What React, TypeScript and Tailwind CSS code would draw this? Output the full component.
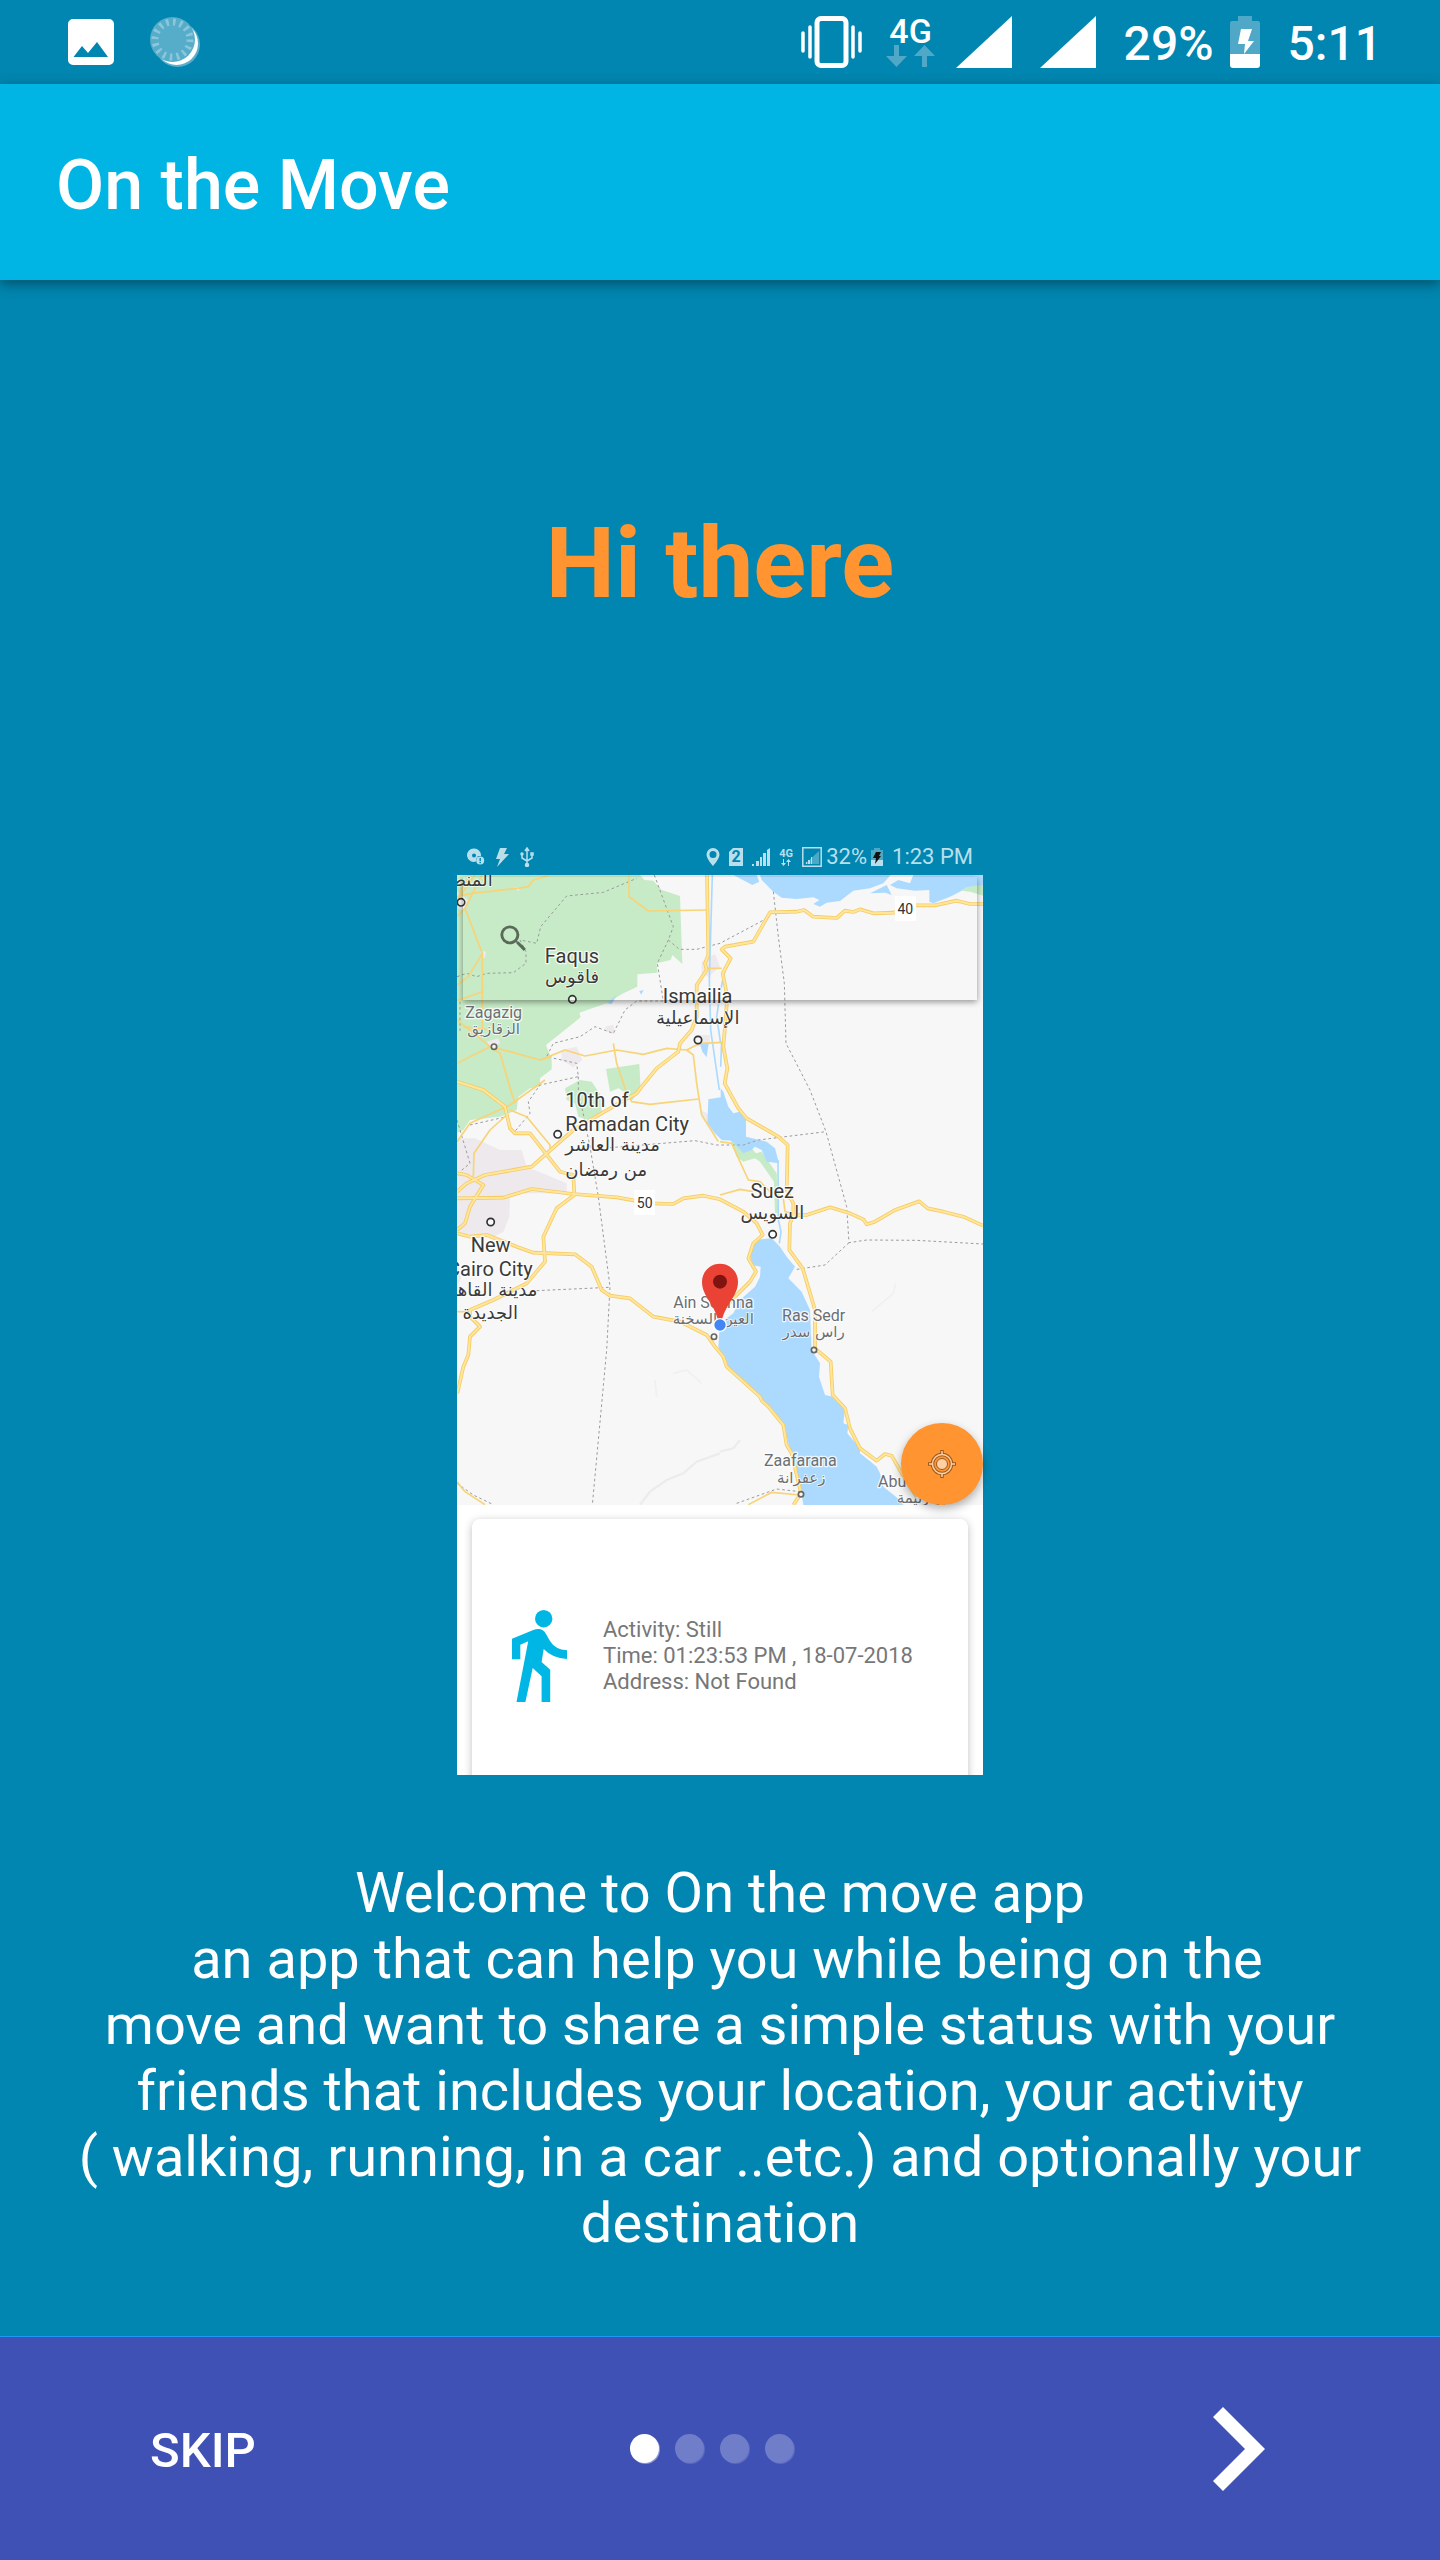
import React from "react";

const majorRoads = [
  "771,135 775,375 765,400 770,420 740,465 740,560 725,600 690,640 685,665 620,715 575,770 560,790 520,812 370,900 245,1010 105,1035 50,1060 21,1085",
  "1599,222 1560,222 1520,212 1455,226 1395,226 1330,248 1270,250 1230,238 1210,246 1185,242 1160,264 1090,260 1062,240 1040,245 960,247 910,335 825,350 815,358 842,385 818,430 832,500 820,650 832,715 824,760 865,835 890,865 985,920 1013,945 1010,1080 1030,1120 1030,1155 1020,1180 1018,1260 1058,1315 1095,1440 1095,1555 1142,1595 1148,1695 1185,1735 1200,1795 1230,1855 1280,1892 1305,1872 1325,1877 1355,1930 1400,2000",
  "1030,1155 1070,1155 1140,1132 1200,1150 1240,1168 1250,1183 1275,1175 1335,1140 1408,1114 1433,1135 1480,1145 1540,1160 1599,1187",
  "21,1105 160,1103 245,1077 370,1092 500,1102 600,1120 670,1122 700,1105 760,1097 810,1108 880,1145 920,1180 938,1215 910,1240 895,1285 918,1325 900,1355 855,1400 820,1440",
  "21,755 100,780 165,830 180,895 195,910 240,910 330,1025 370,1035 373,1095 320,1135 280,1220 285,1295 230,1360 130,1410 60,1440 60,1460 90,1490 60,1520 55,1575 40,1610 22,1690",
  "21,1210 60,1220 110,1215 200,1250 250,1268 375,1273 425,1310 455,1380 480,1397 540,1405 610,1460 690,1475 770,1515 795,1550 820,1580 830,1610 930,1700 935,1712 955,1730 1000,1785 1010,1845 1025,1870 1053,1990 1030,2025",
  "21,1030 50,1035 100,1065 60,1130 45,1180 21,1200",
];

const minorRoads = [
  "21,200 65,190 200,175 235,170 250,150 295,137",
  "95,135 45,235 97,370 97,600",
  "75,135 21,210",
  "60,135 30,185 21,230",
  "21,260 45,235",
  "97,370 55,440 21,465",
  "97,485 21,512",
  "21,570 65,605 120,650 150,670 182,780 195,820",
  "40,590 120,600",
  "21,700 120,650 180,665 270,690 345,660 405,678 500,660 580,673 650,655 710,660 730,675 740,760 755,855 805,935",
  "270,690 305,680",
  "710,660 750,640 820,637",
  "537,135 537,200 595,243 770,240",
  "490,640 500,700 525,775 545,815 600,823 745,807",
  "770,415 815,415",
  "285,750 180,825 60,880 21,935",
  "180,840 230,860 300,945 300,955",
  "170,855 120,900 72,970 70,1040",
  "810,935 845,940 895,1050 930,1055 960,1085 1025,1110",
  "810,1095 870,1078 910,1085",
  "1000,1105 1005,1145 1045,1155",
  "21,1955 45,1985 105,2024",
  "895,2024 965,1987 1050,1995",
  "21,1445 60,1445",
];

const borders = [
  "21,440 50,430 80,440 110,430 190,428 228,400 228,365 210,330 260,340 272,290 350,198 460,187 560,145",
  "613,135 670,290 655,330 688,358 740,358 810,340 960,260",
  "655,330 622,400 640,513 560,513 525,540 490,610 435,590 390,620 310,640 290,680 380,700 385,740 270,765 235,815 240,850 190,910",
  "385,740 385,780 420,950 445,1100 480,1370 470,1560 427,2025",
  "970,185 985,320 1003,460 1008,640 1080,780 1128,905 1190,1130 1197,1238 1250,1230 1400,1231 1599,1242",
  "480,953 735,932 800,945 880,945 925,930 1128,905",
  "1197,1238 1125,1305 1035,1319",
  "260,1382 478,1372",
  "860,2020 980,1977 1050,1985",
  "21,870 45,950 60,1000 30,1025",
  "60,885 170,860",
  "21,1960 70,1995 130,2024",
  "30,515 30,610",
];

const terrain = [
  "570,2024 600,1985 650,1950 700,1930 740,1895 810,1870",
  "810,1865 850,1855 870,1830",
];

const faintTerrain = [
  "1265,1445 1330,1390 1337,1360",
  "615,1650 620,1700",
  "670,1630 710,1620 755,1660",
];

type Place = { x: number; y: number; text: string; anchor?: "start" | "middle" | "end"; small?: boolean; arabic?: boolean };

const places: Place[] = [
  { x: 128, y: 168, text: "المنصورة", anchor: "end", arabic: true },
  { x: 366, y: 398, text: "Faqus" },
  { x: 366, y: 459, text: "فاقوس", arabic: true },
  { x: 743, y: 520, text: "Ismailia" },
  { x: 743, y: 582, text: "الإسماعيلية", arabic: true },
  { x: 131, y: 565, text: "Zagazig", small: true },
  { x: 131, y: 613, text: "الزقازيق", small: true, arabic: true },
  { x: 346, y: 830, text: "10th of", anchor: "start" },
  { x: 346, y: 903, text: "Ramadan City", anchor: "start" },
  { x: 346, y: 964, text: "مدينة العاشر", anchor: "start", arabic: true },
  { x: 346, y: 1038, text: "من رمضان", anchor: "start", arabic: true },
  { x: 122, y: 1265, text: "New" },
  { x: 248, y: 1337, text: "Cairo City", anchor: "end" },
  { x: 262, y: 1398, text: "مدينة القاهرة", anchor: "end", arabic: true },
  { x: 121, y: 1468, text: "الجديدة", arabic: true },
  { x: 967, y: 1103, text: "Suez" },
  { x: 967, y: 1168, text: "السويس", arabic: true },
  { x: 790, y: 1434, text: "Ain Sokhna", small: true },
  { x: 790, y: 1482, text: "العين السخنة", small: true, arabic: true },
  { x: 1091, y: 1474, text: "Ras Sedr", small: true },
  { x: 1091, y: 1522, text: "راس سدر", small: true, arabic: true },
  { x: 1051, y: 1908, text: "Zaafarana", small: true },
  { x: 1054, y: 1958, text: "زعفرانة", small: true, arabic: true },
  { x: 1284, y: 1971, text: "Abu Zenima", anchor: "start", small: true },
  { x: 1340, y: 2018, text: "أبو زنيمة", anchor: "start", small: true, arabic: true },
];

const towns: [number, number, number][] = [
  [33, 217, 11], [367, 508, 11], [744, 630, 11], [132, 650, 8], [323, 913, 11],
  [122, 1176, 11], [968, 1213, 11], [792, 1520, 8], [1092, 1560, 8], [1053, 1993, 8],
];

function MapDrawing() {
  return (
    <svg viewBox="21 135 1578 1890" className="block h-auto w-full" role="img" aria-label="Map">
      <rect x="21" y="135" width="1578" height="1890" fill="#f7f7f7" />
      <g fill="#ede9ed">
        <polygon points="21,925 75,925 150,960 215,960 230,1010 350,1060 350,1090 180,1090 178,1160 160,1205 130,1220 21,1210" />
        <polygon points="335,660 380,650 397,690 370,712 335,690" />
        <polygon points="465,590 490,585 495,612 470,605" />
        <polygon points="755,395 795,372 810,410 775,440 755,430" />
        <polygon points="735,615 780,615 778,645 735,650" />
        <polygon points="750,840 772,850 800,920 775,890" />
        <polygon points="21,1310 40,1330 21,1370" />
      </g>
      <g fill="#c6ebc6">
        <polygon points="21,135 570,135 583,150 610,152 635,180 690,198 697,402 667,375 662,390 620,400 622,428 562,433 562,470 520,490 470,520 388,548 392,562 288,645 305,690 305,718 270,745 270,770 240,775 205,800 200,840 150,860 60,870 40,900 21,908" />
        <polygon points="468,717 568,702 572,780 545,812 530,790 505,775 480,785" />
        <polygon points="390,750 425,755 452,795 455,845 415,870 385,860 375,820 350,810 345,775" />
        <polygon points="840,928 885,960 905,955 918,970 935,965 980,1030 985,1150 975,1150 972,1055 930,995 915,985 880,995 860,980" />
        <polygon points="1535,182 1550,172 1599,163 1599,197 1560,185" />
      </g>
      <g fill="#ede9ed">
        <polygon points="195,172 212,170 205,184" />
        <polygon points="92,362 108,365 105,384 93,380" />
        <polygon points="110,635 145,625 150,640 125,655" />
        <polygon points="21,185 55,210 40,245 21,230" />
      </g>
      <g fill="#acdaff">
        <polygon points="850,135 907,165 928,155 920,135" />
        <polygon points="930,135 935,150 970,185 995,203 1040,207 1090,202 1108,210 1090,222 1110,230 1130,218 1170,213 1210,182 1260,175 1300,160 1322,135" />
        <polygon points="1260,190 1310,165 1325,195 1305,188" />
        <polygon points="1345,150 1380,160 1390,135 1599,135 1599,165 1550,172 1530,185 1500,200 1450,220 1438,215 1438,180 1395,182 1340,175 1320,165" />
        <polygon points="470,520 500,495 485,522" />
        <polygon points="568,483 581,480 573,494" />
        <polygon points="750,643 776,640 770,682 757,665" />
        <polygon points="775,808 812,802 812,775 820,785 835,830 850,850 868,845 888,870 888,920 950,935 975,955 987,1000 950,995 935,960 915,950 905,960 880,970 845,932 815,930 795,910 772,880" />
        <polygon points="915,1230 965,1225 990,1250 1010,1280 1035,1310 1015,1345 1055,1385 1080,1440 1085,1560 1110,1600 1107,1640 1125,1695 1150,1700 1185,1735 1180,1780 1195,1785 1192,1810 1230,1855 1230,1870 1262,1895 1280,1910 1290,1930 1300,1970 1350,2010 1360,2025 1060,2025 1053,1980 1015,1840 1000,1780 940,1710 870,1645 825,1605 805,1550 810,1480 850,1450 870,1410 915,1370 930,1340 932,1310 905,1305 900,1270" />
      </g>
      <path d="M787 135 778 450 782 600 808 780" fill="none" stroke="#acdaff" strokeWidth="5" />
      <path d="M815 635 812 710 M825 420 812 480 800 560 812 640" fill="none" stroke="#acdaff" strokeWidth="5" />
      <path d="M984 990 985 1170 993 1205 988 1240" fill="none" stroke="#acdaff" strokeWidth="5" />
      <g fill="none" stroke="#ececec" strokeWidth="7">
        {terrain.map((p) => <polyline key={p} points={p} />)}
      </g>
      <g fill="none" stroke="#f0f0f0" strokeWidth="5">
        {faintTerrain.map((p) => <polyline key={p} points={p} />)}
      </g>
      <g fill="none" stroke="#9b9b9b" strokeWidth="3" strokeDasharray="8 8">
        {borders.map((p) => <polyline key={p} points={p} />)}
      </g>
      <g fill="none" stroke="#f8d377" strokeWidth="5" strokeLinejoin="round">
        {minorRoads.map((p) => <polyline key={p} points={p} />)}
      </g>
      <g fill="none" stroke="#f6cb62" strokeWidth="11" strokeLinejoin="round">
        {majorRoads.map((p) => <polyline key={p} points={p} />)}
      </g>
      <g fill="none" stroke="#ffe69c" strokeWidth="6" strokeLinejoin="round">
        {majorRoads.map((p) => <polyline key={p} points={p} />)}
      </g>
      <rect x="553" y="1080" width="62" height="75" fill="#fff" />
      <rect x="1335" y="198" width="63" height="75" fill="#fff" />
      <g className="font-[Roboto,sans-serif]" fontSize="42" fill="#333" textAnchor="middle">
        <text x="584" y="1135">50</text>
        <text x="1366" y="253">40</text>
      </g>
      {towns.map(([x, y, r]) => (
        <circle key={`${x}-${y}`} cx={x} cy={y} r={r} fill="#fff" fillOpacity="0.7" stroke={r > 9 ? "#333" : "#666"} strokeWidth="5" />
      ))}
      {places.map((p) => (
        <text
          key={p.text}
          x={p.x}
          y={p.y}
          textAnchor={p.anchor ?? "middle"}
          className={p.arabic ? "font-['DejaVu_Sans',sans-serif]" : "font-[Roboto,sans-serif]"}
          fontSize={p.arabic ? (p.small ? 45 : 54) : p.small ? 48 : 60}
          fill={p.small ? "#6b6f73" : "#3a3a3a"}
          stroke="#fff"
          strokeOpacity="0.8"
          strokeWidth={p.arabic ? 5 : 8}
          strokeLinejoin="round"
          paintOrder="stroke"
        >
          {p.text}
        </text>
      ))}
      <path d="M810 1301C780 1301 756 1325 756 1356C756 1400 798 1425 806 1480H814C822 1425 864 1400 864 1356C864 1325 840 1301 810 1301Z" fill="#ea4335" />
      <circle cx="810" cy="1355" r="21" fill="#7f1310" />
      <circle cx="810" cy="1485" r="19" fill="#4285f4" stroke="#fff" strokeWidth="4" />
    </svg>
  );
}

function MiniStatusBar() {
  return (
    <div className="flex h-10 items-center justify-between pt-1 pr-[10px] pl-[10px] text-[22px] leading-none text-[#b9dfec]">
      <div className="flex items-center gap-[11px]">
        <svg width="18" height="18" viewBox="0 0 18 18" aria-hidden="true">
          <path fill="currentColor" fillRule="evenodd" d="M7 .5a6.7 6.7 0 1 0 2 13V11l2-3h3A6.8 6.8 0 0 0 7 .5ZM7 5.500a2 2 0 1 1 0 4 2 2 0 0 1 0-4Z" />
          <circle cx="13.200" cy="12.500" r="4" fill="currentColor" />
          <path d="M13.200 10v3.200M13.200 14v1.300" stroke="#0086b0" strokeWidth="1.400" />
        </svg>
        <svg width="13" height="19" viewBox="0 0 13 19" aria-hidden="true">
          <path fill="currentColor" d="M4 0h7L8 6h5L1 19l3-8H0Z" />
        </svg>
        <svg width="14" height="20" viewBox="0 0 14 20" fill="none" stroke="currentColor" strokeWidth="1.500" aria-hidden="true">
          <path d="M7 2v16M2 7v4l5 3M12 7v4l-5 3M5 4l2-3 2 3" />
          <circle cx="7" cy="18" r="1.500" fill="currentColor" />
          <circle cx="2" cy="7" r="1" />
          <path d="M11 6h2v2h-2z" />
        </svg>
      </div>
      <div className="flex items-center gap-[9px]">
        <svg width="14" height="18" viewBox="0 0 14 18" aria-hidden="true">
          <path fill="currentColor" fillRule="evenodd" d="M7 0a6.500 6.500 0 0 0-6.500 6.500C.5 11 7 18 7 18s6.500-7 6.500-11.500A6.500 6.500 0 0 0 7 0Zm0 3a3.500 3.500 0 1 1 0 7 3.500 3.500 0 0 1 0-7Z" />
        </svg>
        <span className="relative flex items-center">
          <svg width="14" height="18" viewBox="0 0 14 18" aria-hidden="true">
            <path fill="currentColor" d="M4 0h10v18H0V4Z" />
          </svg>
          <span className="absolute inset-0 flex items-center justify-center text-[16px] font-bold text-[#0086b0]">2</span>
        </span>
        <svg width="18" height="18" viewBox="0 0 18 18" fill="currentColor" aria-hidden="true">
          <path d="M0 16h2v2H0zM4 13h3v5H4zM8 9h2v9H8zM11 5h3v13h-3zM15 2l3-2v18h-3z" />
        </svg>
        <span className="flex w-[14px] flex-col items-center">
          <span className="text-[11px] font-bold">4G</span>
          <svg width="10" height="7" viewBox="0 0 10 7" fill="currentColor" aria-hidden="true">
            <path d="M2 0h1v4h2L2.500 7 0 4h2zM7 7h1V3h2L7.500 0 5 3h2z" />
          </svg>
        </span>
        <svg width="20" height="20" viewBox="0 0 20 20" aria-hidden="true">
          <path d="M.8.8h18.400v18.400H.8z" fill="none" stroke="currentColor" strokeWidth="1.500" />
          <path d="M3 17 17 4v13z" fill="currentColor" opacity=".4" />
          <path d="M4 15h1v2H4zM6 13h2v4H6zM9 10h1v7H9z" fill="currentColor" />
        </svg>
        <span className="-mx-[5px]">32%</span>
        <svg width="12" height="18" viewBox="0 0 12 18" aria-hidden="true">
          <path d="M3 0h6v2h3v10H0V2h3z" fill="currentColor" opacity=".4" />
          <path d="M0 12h12v6H0z" fill="currentColor" />
          <path d="M5 4h5L8 8h2l-6 8 1-6H2z" fill="#111" />
        </svg>
        <span>1:23 PM</span>
      </div>
    </div>
  );
}

function StatusBar() {
  return (
    <div className="flex h-[84px] items-center justify-between pr-[58px] pl-[68px] text-white">
      <div className="flex items-center gap-9">
        <svg width="46" height="46" viewBox="0 0 46 46" aria-hidden="true">
          <path fill="#fff" fillRule="evenodd" d="M5 0h36a5 5 0 0 1 5 5v36a5 5 0 0 1-5 5H5a5 5 0 0 1-5-5V5a5 5 0 0 1 5-5ZM5.500 38H40L29 23 20 34 14 27Z" />
        </svg>
        <svg width="50" height="50" viewBox="0 0 50 50" aria-hidden="true">
          <circle cx="27.500" cy="27.500" r="22.500" fill="#5aaecb" />
          <circle cx="26.500" cy="26.500" r="21.500" fill="#fff" />
          <circle cx="22.500" cy="22.500" r="22.500" fill="#56adca" />
          <circle cx="22.500" cy="22.500" r="17.500" fill="none" stroke="#8cc6da" strokeWidth="7" strokeDasharray="2.600 4.270" />
        </svg>
      </div>
      <div className="flex items-center">
        <svg width="61" height="52" viewBox="0 0 61 52" fill="none" stroke="#fff" aria-hidden="true">
          <rect x="16" y="2.500" width="29" height="47" rx="4" strokeWidth="5" />
          <path d="M9 11v30M52 11v30M2 17v18M59 17v18" strokeWidth="3.500" strokeLinecap="round" />
        </svg>
        <div className="ml-6 flex w-[50px] flex-col items-center">
          <span className="text-[34px] leading-7 font-medium">4G</span>
          <svg width="50" height="22" viewBox="0 0 50 22" fill="#4fa8c7" aria-hidden="true">
            <path d="M8 0h5v11h8L10.500 22 0 11h8zM36 22h5V11h8L38.500 0 28 11h8z" />
          </svg>
        </div>
        <svg width="56" height="52" viewBox="0 0 56 52" className="ml-5" aria-hidden="true"><path d="M56 0v52H0z" fill="#fff" /></svg>
        <svg width="56" height="52" viewBox="0 0 56 52" className="ml-7" aria-hidden="true"><path d="M56 0v52H0z" fill="#fff" /></svg>
        <span className="ml-7 pt-1 text-[48px] leading-none font-medium">29%</span>
        <svg width="30" height="52" viewBox="0 0 30 52" className="ml-4" aria-hidden="true">
          <path d="M8 0h14v5h6q2 0 2 2v31H0V7q0-2 2-2h6z" fill="#4fa8c7" />
          <path d="M0 38h30v11q0 3-3 3H3q-3 0-3-3z" fill="#fff" />
          <path d="M11 13h11l-4 12h6L14 38l1-10H8z" fill="#fff" />
        </svg>
        <span className="ml-7 pt-1 text-[48px] leading-none font-medium">5:11</span>
      </div>
    </div>
  );
}

function PhonePreview() {
  return (
    <div className="w-[526px] max-w-full">
      <MiniStatusBar />
      <div className="relative">
        <div className="relative overflow-hidden">
          <MapDrawing />
          <label className="absolute inset-x-[6px] top-[2px] flex h-[123px] items-center gap-4 pl-[33px] shadow-[0_2px_6px_rgba(0,0,0,0.4)]">
            <svg width="35" height="35" viewBox="0 0 24 24" className="text-black/55" aria-hidden="true">
              <path fill="currentColor" d="M15.500 14h-.79l-.28-.27A6.471 6.471 0 0 0 16 9.500 6.500 6.500 0 1 0 9.500 16c1.610 0 3.090-.59 4.230-1.570l.27.280v.79l5 4.990L20.490 19l-4.990-5zm-6 0C7.010 14 5 11.990 5 9.500S7.010 5 9.500 5 14 7.010 14 9.500 11.990 14 9.500 14z" />
            </svg>
            <input type="search" aria-label="Search" className="min-w-0 flex-1 bg-transparent outline-none" />
          </label>
        </div>
        <button type="button" aria-label="My location" className="absolute right-0 bottom-0 flex size-[82px] items-center justify-center rounded-full bg-[#ff9430] shadow-[0_4px_10px_rgba(0,0,0,0.3)]">
          <svg width="28" height="28" viewBox="0 0 28 28" fill="none" aria-hidden="true">
            <circle cx="14" cy="14" r="9.500" stroke="#9b5a20" strokeWidth="3.500" />
            <path d="M14 0v6M14 22v6M0 14h6M22 14h6" stroke="#9b5a20" strokeWidth="3.500" />
            <circle cx="14" cy="14" r="9.500" stroke="#ffd0a4" strokeWidth="1.500" />
            <path d="M14 1v4M14 23v4M1 14h4M23 14h4" stroke="#ffd0a4" strokeWidth="1.500" />
            <circle cx="14" cy="14" r="5.500" fill="#ffd0a4" stroke="#9b5a20" strokeWidth="1" />
          </svg>
        </button>
      </div>
      <div className="h-[270px] overflow-hidden bg-white px-[15px] pt-[14px]">
        <div className="flex h-[274px] items-center gap-9 rounded-lg bg-white pl-10 shadow-[0_2px_8px_rgba(0,0,0,0.25)]">
          <svg width="55" height="92" viewBox="0 0 55 92" fill="#00b6e4" aria-hidden="true">
            <circle cx="31.700" cy="8.700" r="8.700" />
            <path d="M0 28.700 20.700 20.300Q30 16.500 34 24L38 31Q43 39.500 55 40.300V49Q40 48 31.700 39L29.600 52 38.200 59.700V92H29.600V66.300L20.700 58 13.400 92H4.500L16.200 31.300 8.300 34.700V49.300H0Z" />
          </svg>
          <p className="text-[22px] leading-[26px] text-[#777]">
            Activity: Still
            <br />
            Time: 01:23:53 PM , 18-07-2018
            <br />
            Address: Not Found
          </p>
        </div>
      </div>
    </div>
  );
}

const pages = ["Welcome", "Location", "Activity", "Destination"];

export default function App() {
  return (
    <div className="flex min-h-screen flex-col bg-[#0086b0] font-[Roboto,sans-serif]">
      <StatusBar />
      <header className="flex h-[196px] items-center bg-[#00b5e4] px-14 text-white shadow-[0_4px_12px_rgba(0,0,0,0.4)]">
        <h1 className="pt-[6px] text-[70px] leading-none font-medium">On the Move</h1>
      </header>
      <main className="flex flex-1 flex-col items-center">
        <h2 className="pt-[228px] text-[98px] leading-[112px] font-bold text-[#ff9430]">Hi there</h2>
        <div className="mt-[215px] flex w-full justify-center">
          <PhonePreview />
        </div>
        <p className="mt-[85px] text-center text-[56px] leading-[66px] whitespace-pre-wrap text-white">
          {"Welcome to On the move app\n an app that can help you while being on the\nmove and want to share a simple status with your\nfriends that includes your location, your activity\n( walking, running, in a car ..etc.) and optionally your\ndestination"}
        </p>
      </main>
      <footer className="grid h-[224px] grid-cols-3 items-center border-t border-[#2196f3] bg-[#3f51b5] text-white">
        <button type="button" className="justify-self-start pt-[3px] pl-[150px] text-[49px] leading-none font-medium">SKIP</button>
        <div className="flex justify-center gap-4 pr-4">
          {pages.map((name, i) => (
            <button
              key={name}
              type="button"
              aria-label={name}
              className={
                i === 0
                  ? "size-[29px] rounded-full bg-white shadow-[1px_1px_0_#8b96d3]"
                  : "size-[29px] rounded-full bg-[#707dc9] shadow-[1px_1px_0_#5a69c0]"
              }
            />
          ))}
        </div>
        <button type="button" aria-label="Next" className="mr-[175px] justify-self-end">
          <svg width="52" height="84" viewBox="0 0 52 84" aria-hidden="true">
            <path d="M10 0 52 42 10 84 0 74 32 42 0 10Z" fill="#fff" />
          </svg>
        </button>
      </footer>
    </div>
  );
}
